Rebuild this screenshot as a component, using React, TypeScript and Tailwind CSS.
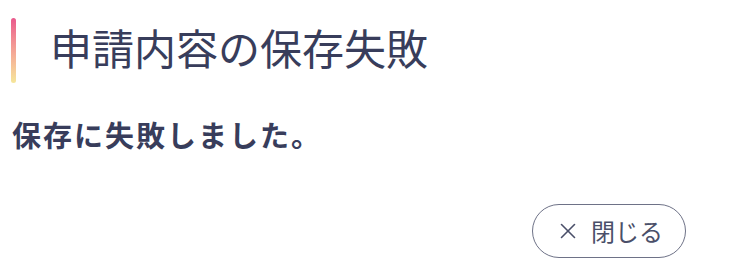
import { X } from 'lucide-react'

export default function App() {
  return (
    <div
      className="w-[747px] h-[267px] bg-white text-[#383d5b] overflow-hidden"
      style={{ fontFamily: '"Noto Sans CJK JP", "Noto Sans", sans-serif' }}
    >
      <div className="flex items-center h-[65px] mt-[18px] ml-[11px]">
        <div className="w-[5px] h-full rounded-full bg-gradient-to-b from-[#e9588c] to-[#f5e69a]" />
        <h1 className="ml-[34px] mb-[8px] text-[42px] font-normal leading-none tracking-normal">
          申請内容の保存失敗
        </h1>
      </div>

      <p className="mt-[37px] ml-[12px] text-[29px] font-bold leading-none tracking-[2px]">
        保存に失敗しました。
      </p>

      <div className="flex justify-end mt-[55px] mr-[61px]">
        <button className="flex items-center justify-center w-[154px] h-[54px] rounded-full border-[1.5px] border-[#6e7287] text-[#4a4f69] text-[24px] gap-[10px]">
          <X className="w-[26px] h-[26px]" strokeWidth={1.5} />
          <span className="leading-none">閉じる</span>
        </button>
      </div>
    </div>
  )
}
